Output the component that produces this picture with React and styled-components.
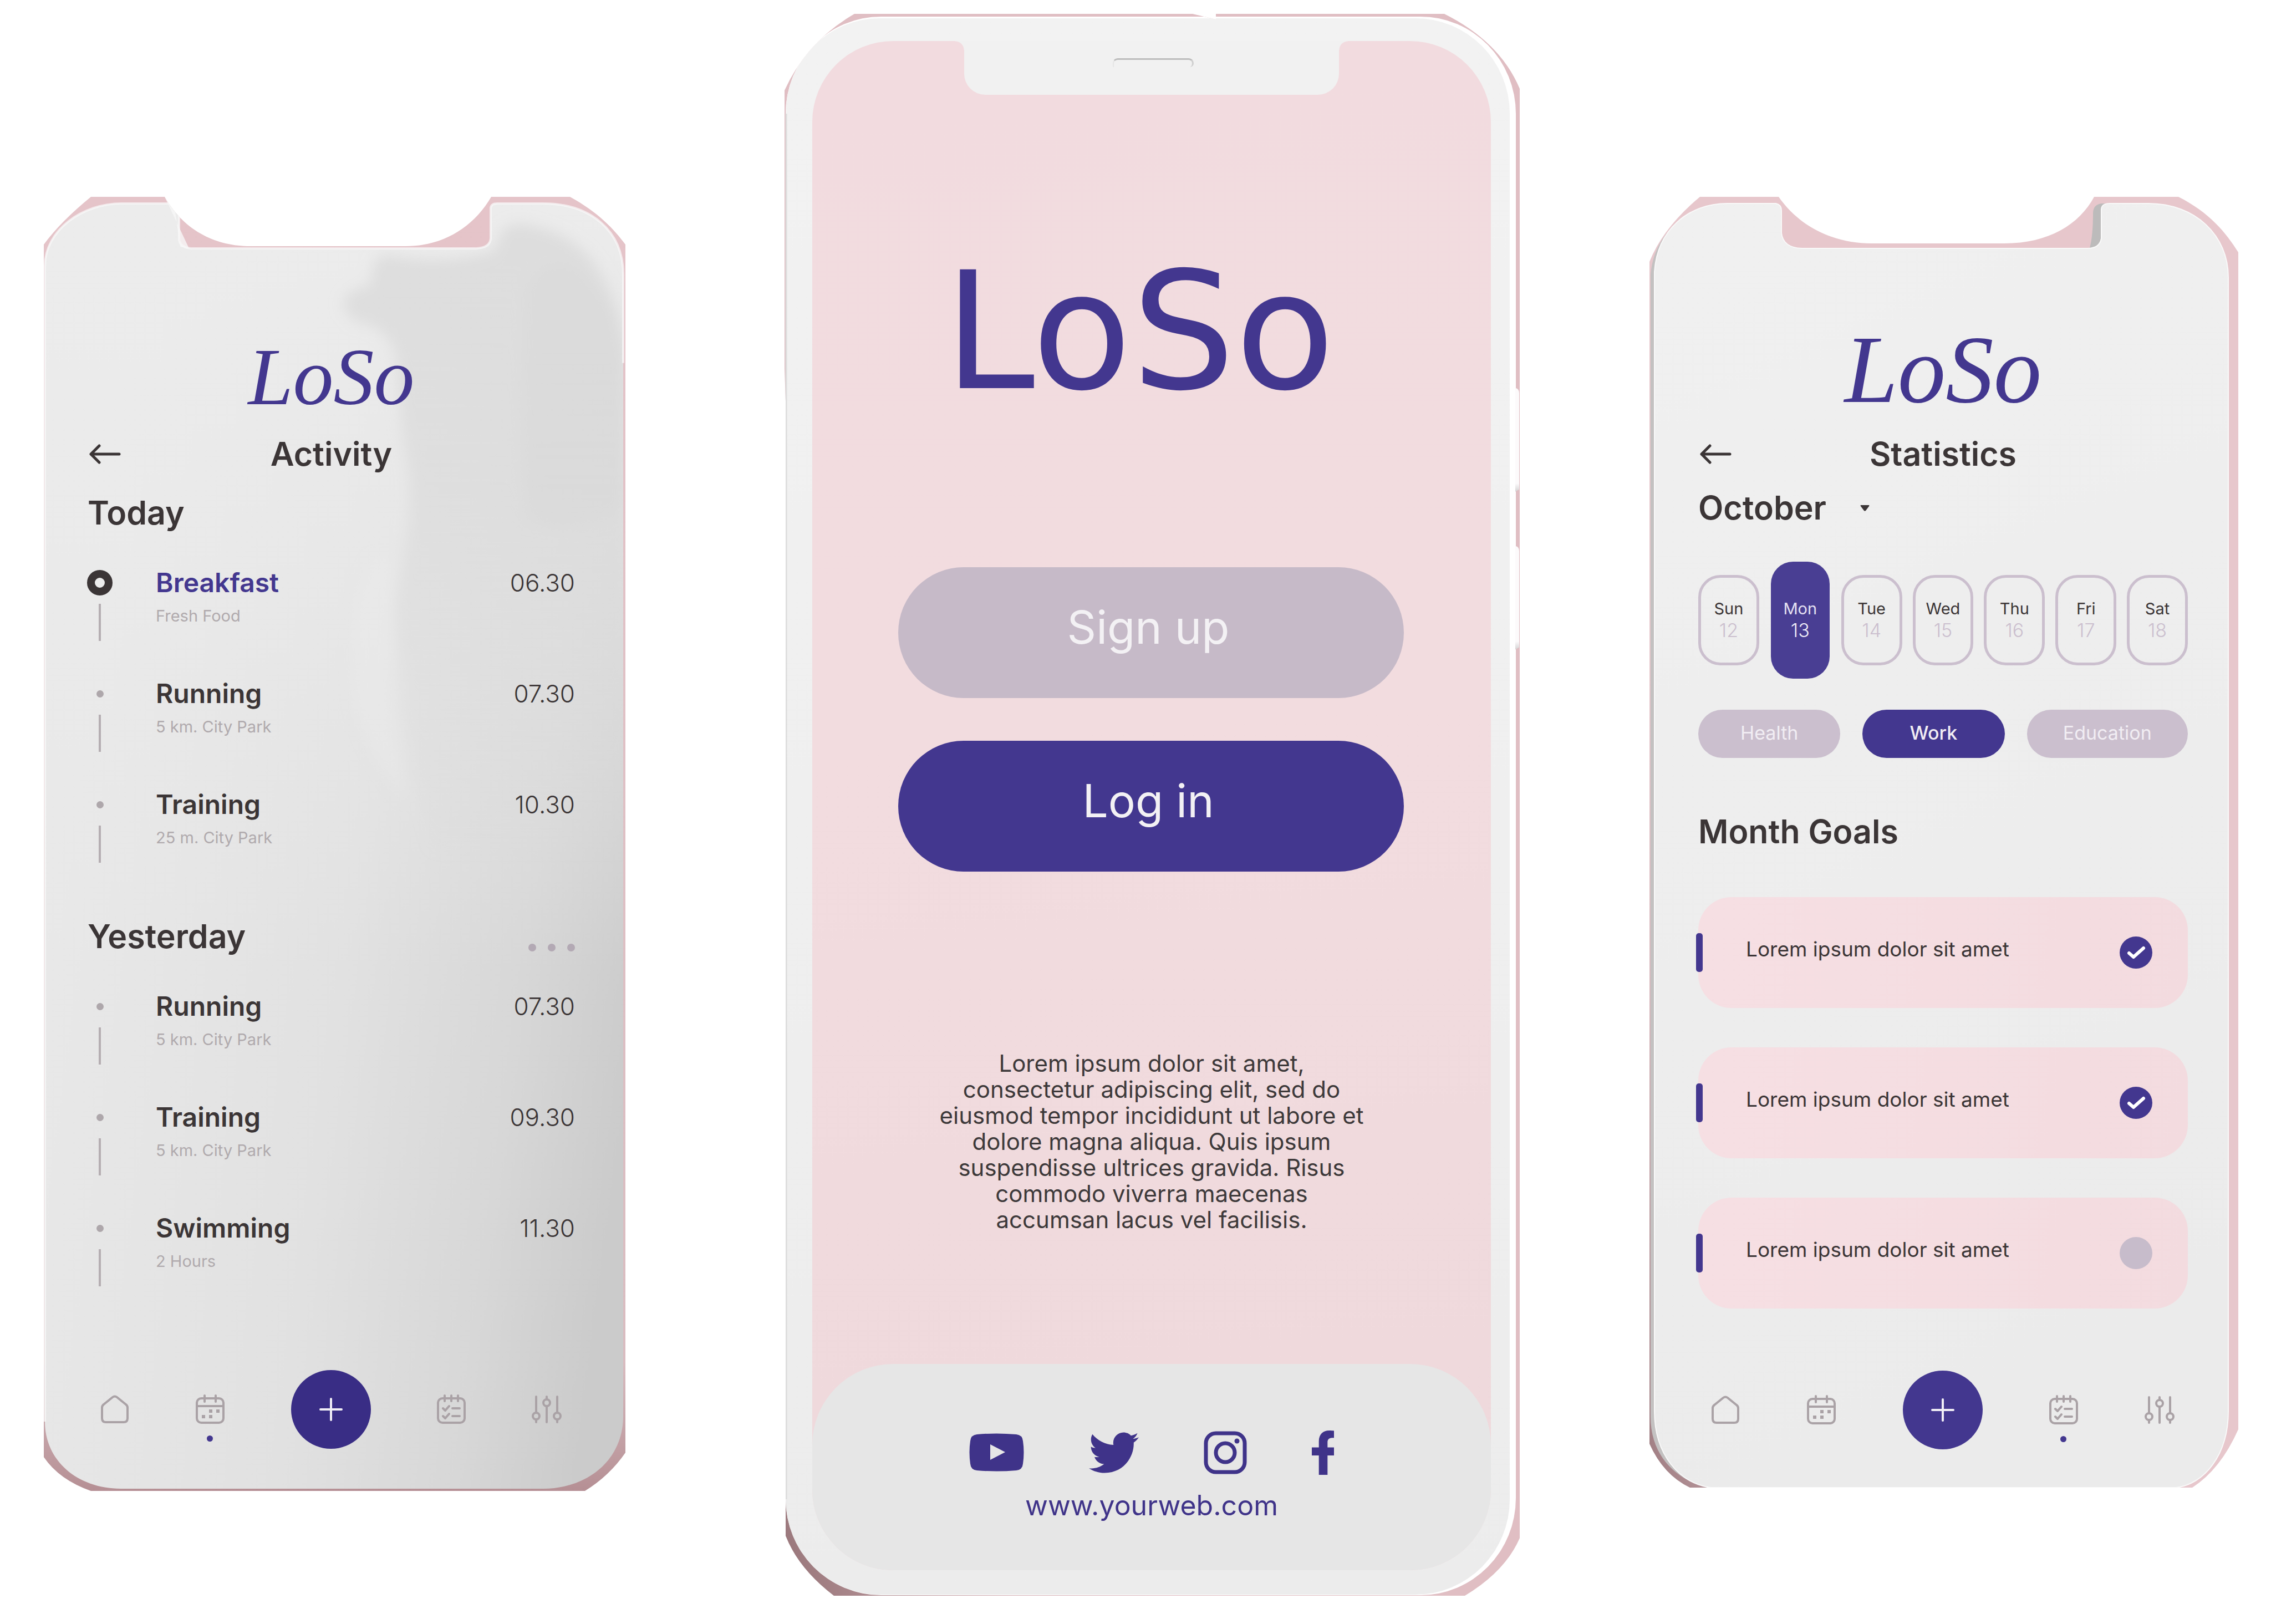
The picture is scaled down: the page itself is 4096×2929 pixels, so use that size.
import React from "react";
import styled, { createGlobalStyle, css } from "styled-components";
import { FaTwitter, FaFacebookF } from "react-icons/fa";

const indigo = "#43378f";
const ink = "#3b3536";
const lilac = "#cbbfce";
const muted = "#aea7ab";
const sans = 'Inter, "Open Sans", sans-serif';

const GlobalStyle = createGlobalStyle`
  *, *::before, *::after { box-sizing: border-box; }
  body { margin: 0; background: #ffffff; color: ${ink}; font-family: ${sans}; }
  h1, h2, h3, p, ul { margin: 0; padding: 0; font-weight: inherit; }
  ul { list-style: none; }
  button, select { margin: 0; padding: 0; border: 0; background: none; color: inherit; font-family: inherit; cursor: pointer; }
  a { color: inherit; text-decoration: none; }
`;

const Stage = styled.main`
  display: grid;
  grid-template-columns: 1049fr 1379fr 1062fr;
  column-gap: 234px;
  align-items: start;
  min-height: 100vh;
  padding: 25px 59px 50px 79px;
`;

const Artwork = styled.svg`
  position: absolute;
  inset: 0;
  width: 100%;
  height: 100%;
  z-index: -1;
`;

/* ---------- side phones ---------- */

const SidePhone = styled.section`
  position: relative;
  z-index: 0;
  display: flex;
  flex-direction: column;
  margin-top: 330px;
  padding: 220px 91px ${(p) => p.$bottom}px ${(p) => p.$left}px;
`;

const LogoRow = styled.div`
  display: flex;
  align-items: flex-end;
  justify-content: center;
  height: 178px;
`;

const SerifLogo = styled.h1`
  color: ${indigo};
  font-family: "Liberation Serif", serif;
  font-style: italic;
  font-size: ${(p) => p.$size}px;
  line-height: 1;
`;

const Header = styled.header`
  display: grid;
  grid-template-columns: 1fr auto 1fr;
  align-items: center;
  margin-top: 36px;
`;

const BackButton = styled.button`
  display: flex;
  justify-self: start;
`;

const Title = styled.h2`
  font-size: 59px;
  font-weight: 600;
  line-height: 60px;
`;

const SectionRow = styled.div`
  display: flex;
  justify-content: space-between;
  align-items: flex-end;
  margin-top: ${(p) => p.$top}px;
`;

const MoreButton = styled.button`
  display: flex;
  gap: 21px;
  padding-bottom: 3px;
`;

const MoreDot = styled.span`
  width: 14px;
  height: 14px;
  border-radius: 50%;
  background: #b3a9b4;
`;

const Timeline = styled.ul`
  display: flex;
  flex-direction: column;
  gap: 67px;
  margin: 68px 0 0 -1px;
`;

const Entry = styled.li`
  display: grid;
  grid-template-columns: 46px 1fr auto;
  column-gap: 78px;
`;

const Marker = styled.div`
  display: flex;
  flex-direction: column;
  align-items: center;
  height: 133px;
`;

const Bullet = styled.span`
  display: flex;
  align-items: center;
  height: 56px;

  &::before {
    content: "";
    width: 13px;
    height: 13px;
    border-radius: 50%;
    background: ${muted};
    ${(p) =>
      p.$active &&
      css`
        width: 46px;
        height: 46px;
        border: 14px solid ${ink};
        background: #ececec;
      `}
  }
`;

const Stem = styled.span`
  width: 4px;
  flex: 1;
  margin-top: 10px;
  background: #b5aeb2;
`;

const EntryName = styled.h3`
  color: ${(p) => (p.$active ? indigo : ink)};
  font-size: 48px;
  font-weight: 600;
  line-height: 56px;
`;

const EntryNote = styled.p`
  margin-top: 14px;
  color: #b0aaad;
  font-size: 29px;
  line-height: 36px;
`;

const EntryTime = styled.time`
  font-size: 44px;
  font-weight: 300;
  line-height: 56px;
`;

const BottomNav = styled.nav`
  display: flex;
  justify-content: space-between;
  align-items: center;
  margin: ${(p) => p.$top}px 24px 0 22px;
`;

const NavLink = styled.a`
  position: relative;
  display: flex;
  color: #aaa2a6;

  ${(p) =>
    p.$active &&
    css`
      &::after {
        content: "";
        position: absolute;
        top: 74px;
        left: calc(50% - 6px);
        width: 11px;
        height: 11px;
        border-radius: 50%;
        background: ${indigo};
      }
    `}
`;

const AddButton = styled.button`
  display: flex;
  align-items: center;
  justify-content: center;
  width: 144px;
  height: 142px;
  border-radius: 50%;
  background: ${(p) => (p.$deep ? "#392d85" : indigo)};
`;

const MonthPicker = styled.label`
  display: flex;
  align-items: center;
  gap: 60px;
  margin-top: 37px;
`;

const MonthSelect = styled.select`
  appearance: none;
  font-size: 59px;
  font-weight: 600;
  line-height: 60px;
  height: 60px;
`;

const Week = styled.div`
  display: grid;
  grid-template-columns: repeat(7, 1fr);
  column-gap: 19px;
  align-items: center;
  margin-top: 67px;
`;

const Day = styled.button`
  display: flex;
  flex-direction: column;
  align-items: center;
  justify-content: center;
  height: 163px;
  border: 5px solid ${lilac};
  border-radius: 40px;

  ${(p) =>
    p.$active &&
    css`
      height: 211px;
      margin: 0 2px;
      border: 0;
      background: #493e93;
      color: #e4e0f2;
    `}
`;

const DayName = styled.span`
  font-size: 29px;
  line-height: 36px;
`;

const DayNumber = styled.span`
  color: ${(p) => (p.$active ? "#f1eff8" : lilac)};
  font-size: 34px;
  font-weight: 300;
  line-height: 42px;
`;

const Chips = styled.div`
  display: grid;
  grid-template-columns: 255fr 255fr 289fr;
  column-gap: 40px;
  margin-top: 56px;
`;

const Chip = styled.button`
  height: 87px;
  border-radius: 44px;
  background: ${(p) => (p.$active ? indigo : lilac)};
  color: #f1edf3;
  font-size: 34px;
  font-weight: ${(p) => (p.$active ? 500 : 400)};
  line-height: 42px;
  padding-bottom: 4px;
`;

const Goals = styled.div`
  display: flex;
  flex-direction: column;
  gap: 71px;
  margin-top: 88px;
`;

const Goal = styled.label`
  position: relative;
  display: flex;
  align-items: center;
  justify-content: space-between;
  height: 200px;
  padding: 0 64px 0 86px;
  border-radius: 60px;
  background: linear-gradient(100deg, #f6dfe3, #f3dbdf);
  font-size: 37px;
  line-height: 48px;
  cursor: pointer;

  &::before {
    content: "";
    position: absolute;
    left: -4px;
    top: 65px;
    width: 12px;
    height: 70px;
    border-radius: 5px;
    background: ${indigo};
  }
`;

const GoalText = styled.span`
  padding-bottom: 12px;
`;

const Tick = styled.span`
  display: grid;
  place-items: center;

  & > * {
    grid-area: 1 / 1;
  }

  svg {
    pointer-events: none;
  }
`;

const TickInput = styled.input`
  appearance: none;
  width: 59px;
  height: 58px;
  margin: 0;
  border-radius: 50%;
  background: #c7bccb;

  &:checked {
    background: ${indigo};
  }
`;

/* ---------- centre phone ---------- */

const CentreColumn = styled.div`
  padding-left: 53px;
`;

const CentrePhone = styled.section`
  position: relative;
  z-index: 0;
  padding: 49px 52px 46px 50px;
`;

const Screen = styled.div`
  display: flex;
  flex-direction: column;
  align-items: center;
  overflow: hidden;
  border-radius: 146px;
  background: linear-gradient(175deg, #f2dbdf, #f2dcdf 45%, #eed8db);
`;

const Notch = styled.div`
  position: relative;
  display: flex;
  justify-content: center;
  width: 676px;
  height: 97px;
  padding: 31px 0 0 6px;
  border-radius: 0 0 38px 38px;
  background: #f1f1f1;

  &::before,
  &::after {
    content: "";
    position: absolute;
    top: 0;
    width: 16px;
    height: 16px;
  }

  &::before {
    right: 100%;
    background: radial-gradient(circle at 0 100%, transparent 15px, #f1f1f1 16px);
  }

  &::after {
    left: 100%;
    background: radial-gradient(circle at 100% 100%, transparent 15px, #f1f1f1 16px);
  }
`;

const Speaker = styled.span`
  width: 146px;
  height: 16px;
  border-top: 3px solid #bdbdbd;
  border-right: 3px solid #cfcfcf;
  border-left: 2px solid #e6e6e6;
  border-radius: 10px 10px 8px 0;
`;

const SansLogo = styled.h1`
  margin-top: 257px;
  padding-right: 44px;
  color: ${indigo};
  font-family: "DejaVu Sans", sans-serif;
  font-size: 294px;
  line-height: 340px;
`;

const Actions = styled.div`
  display: flex;
  flex-direction: column;
  gap: 77px;
  align-self: stretch;
  margin-top: 255px;
  padding: 0 157px 0 155px;
`;

const Action = styled.button`
  height: 236px;
  padding: 0 10px 18px 0;
  border-radius: 118px;
  background: ${(p) => (p.$primary ? indigo : "#c6bac8")};
  color: #f3f1f4;
  font-size: 82px;
  line-height: 96px;
`;

const Blurb = styled.p`
  margin-top: 322px;
  color: #3d393a;
  font-size: 42px;
  line-height: 47px;
  text-align: center;
  white-space: pre-line;
`;

const Footer = styled.footer`
  display: flex;
  flex-direction: column;
  align-items: center;
  align-self: stretch;
  gap: 25px;
  margin-top: 237px;
  padding: 119px 0 87px;
  border-radius: 146px 146px 0 0;
  background: #e6e6e6;
  color: #3f3389;
`;

const Socials = styled.div`
  display: flex;
  align-items: center;
  gap: 117px;
  height: 81px;
`;

const Social = styled.a`
  display: flex;
`;

const TwitterIcon = styled(FaTwitter)`
  width: 90px;
  height: 74px;
`;

const FacebookIcon = styled(FaFacebookF)`
  width: 40px;
  height: 80px;
`;

const WebLink = styled.a`
  font-size: 50px;
  line-height: 60px;
`;

/* ---------- icons ---------- */

const ArrowIcon = () => (
  <svg width="60" height="36" viewBox="-2 0 60 36" fill="none" stroke={ink} strokeWidth="5" strokeLinecap="round" strokeLinejoin="round">
    <path d="M55 18H4M19 3L4 18L19 33" />
  </svg>
);

const NavIcon = ({ children }) => (
  <svg width="54" height="54" viewBox="0 0 54 54" fill="none" stroke="currentColor" strokeWidth="4" strokeLinecap="round" strokeLinejoin="round">
    {children}
  </svg>
);

const HomeIcon = () => (
  <NavIcon>
    <path d="M4 24Q4 20 7 18L23 5Q27 2 31 5L47 18Q50 20 50 24V43Q50 50 43 50H11Q4 50 4 43Z" />
  </NavIcon>
);

const CalendarIcon = () => (
  <NavIcon>
    <rect x="3" y="7" width="48" height="44" rx="8" />
    <path d="M3 21H51M17 2V13M37 2V13" />
    <path d="M25 30h6M38 30h6M12 40h6M25 40h6" strokeWidth="6" strokeLinecap="butt" />
  </NavIcon>
);

const TasksIcon = () => (
  <NavIcon>
    <rect x="3" y="7" width="48" height="44" rx="8" />
    <path d="M15 2V12M27 2V12M39 2V12" />
    <path d="M12 25l4 4l7 -8M12 39l4 4l7 -8M29 25H42M29 39H42" />
  </NavIcon>
);

const SlidersIcon = () => (
  <NavIcon>
    <path d="M8 4V33M8 45V50M27 4V9M27 21V50M46 4V33M46 45V50" />
    <circle cx="8" cy="39" r="6" />
    <circle cx="27" cy="15" r="6" />
    <circle cx="46" cy="39" r="6" />
  </NavIcon>
);

const PlusIcon = () => (
  <svg width="44" height="44" viewBox="0 0 44 44" stroke="#f1eff6" strokeWidth="4" strokeLinecap="round">
    <path d="M22 3V41M3 22H41" />
  </svg>
);

const YoutubeIcon = () => (
  <svg width="99" height="69" viewBox="0 0 99 69">
    <path fill="currentColor" d="M14 2Q49 -1 85 2Q96 3 97 14Q100 34 97 55Q96 66 85 67Q49 70 14 67Q3 66 2 55Q-1 34 2 14Q3 3 14 2Z" />
    <path fill="#e6e6e6" d="M38 20L65 34L38 48Z" />
  </svg>
);

const InstagramIcon = () => (
  <svg width="78" height="78" viewBox="0 0 78 78" fill="none" stroke="currentColor" strokeWidth="7">
    <rect x="4" y="4" width="70" height="70" rx="18" />
    <circle cx="39" cy="39" r="17" />
    <circle cx="60" cy="18" r="4.5" fill="currentColor" stroke="none" />
  </svg>
);

const CheckMark = () => (
  <svg width="34" height="24" viewBox="0 0 34 24" fill="none" stroke="#fff" strokeWidth="6" strokeLinecap="round" strokeLinejoin="round">
    <path d="M4 13L12 20L30 4" />
  </svg>
);

/* ---------- device artwork ---------- */

const ActivityCase = () => (
  <Artwork viewBox="0 0 1049 2335" preserveAspectRatio="none" aria-hidden="true">
    <defs>
      <clipPath id="a-outline">
        <path d="M0 86Q30 45 85 0H218C255 65 315 89 372 89H653C720 89 775 55 807 0H949C1000 28 1028 58 1049 86V2266Q1020 2308 976 2335H85Q28 2315 0 2274Z" />
      </clipPath>
      <linearGradient id="a-edge" x1="0" y1="0" x2="0" y2="1">
        <stop offset="0" stopColor="#e5c4c9" />
        <stop offset="0.9" stopColor="#d9bcc0" />
        <stop offset="1" stopColor="#b58f94" />
      </linearGradient>
      <linearGradient id="a-body" gradientUnits="userSpaceOnUse" x1="0" y1="1400" x2="1060" y2="1540">
        <stop offset="0" stopColor="#e8e8e8" />
        <stop offset="0.5" stopColor="#e1e1e1" />
        <stop offset="0.8" stopColor="#d7d7d7" />
        <stop offset="1" stopColor="#cbcbcb" />
      </linearGradient>
      <linearGradient id="a-light" x1="0" y1="0" x2="0" y2="1">
        <stop offset="0" stopColor="#ececec" />
        <stop offset="0.12" stopColor="#ececec" stopOpacity="0.8" />
        <stop offset="0.6" stopColor="#ececec" stopOpacity="0" />
      </linearGradient>
      <linearGradient id="a-shade" gradientUnits="userSpaceOnUse" x1="0" y1="100" x2="0" y2="1180">
        <stop offset="0" stopColor="#d6d6d6" stopOpacity="0.65" />
        <stop offset="0.4" stopColor="#d6d6d6" stopOpacity="0.5" />
        <stop offset="1" stopColor="#d6d6d6" stopOpacity="0.05" />
      </linearGradient>
      <filter id="a-soft" x="-20%" y="-20%" width="140%" height="140%">
        <feGaussianBlur stdDeviation="12" />
      </filter>
      <clipPath id="a-bodyclip">
        <path d="M2 125C2 60 70 12 140 12H226Q244 13 244 30V78Q247 92 266 93H780Q805 92 806 75V20Q807 12 818 12H900C985 12 1045 60 1045 140V2200C1045 2280 980 2331 900 2331H140C60 2331 2 2280 2 2210Z" />
      </clipPath>
    </defs>
    <g clipPath="url(#a-outline)">
      <rect width="1049" height="2335" fill="url(#a-edge)" />
      <g clipPath="url(#a-bodyclip)">
        <rect width="1049" height="2335" fill="url(#a-body)" />
        <rect width="1049" height="2335" fill="url(#a-light)" />
        <g filter="url(#a-soft)">
          <path fill="url(#a-shade)" d="M538 196Q545 165 590 160Q590 105 620 105Q720 125 815 96Q820 45 865 49Q960 65 1000 130Q1045 200 1050 300V1180H700Q672 1080 650 900Q630 780 636 708Q660 620 660 509Q640 400 636 290Q620 230 560 225Z" />
          <path fill="#d8d8d8" opacity="0.4" d="M870 160Q900 110 960 130Q1045 200 1050 300V560Q960 620 870 585Q850 380 870 160Z" />
          <path fill="#ebebeb" opacity="0.45" d="M590 660Q640 620 630 760Q620 900 655 1090Q560 980 560 880Q550 740 590 660Z" />
        </g>
      </g>
      <path fill="none" stroke="#fafafa" strokeOpacity="0.7" strokeWidth="4" d="M2 2210V125C2 60 70 12 140 12H226Q244 14 244 30V78Q247 92 266 93H780Q805 92 806 75V20Q807 12 818 12H900C985 12 1045 60 1045 140V300" />
      <path fill="#f8f8f8" d="M218 0L262 93L246 90L236 20Z" opacity="0.8" />
    </g>
  </Artwork>
);

const StatisticsCase = () => (
  <Artwork viewBox="0 0 1062 2328" preserveAspectRatio="none" aria-hidden="true">
    <defs>
      <clipPath id="s-outline">
        <path d="M0 117Q25 55 91 0H233C275 60 340 84 400 84H640C720 84 775 50 802 0H954C1010 28 1040 65 1062 100V2223Q1030 2295 979 2328H73Q25 2305 0 2249Z" />
      </clipPath>
      <linearGradient id="s-edge" x1="0" y1="1" x2="0.3" y2="0.8">
        <stop offset="0" stopColor="#9d7b80" />
        <stop offset="0.6" stopColor="#d9b9be" />
        <stop offset="1" stopColor="#e7c7cc" />
      </linearGradient>
      <linearGradient id="s-body" x1="0" y1="0" x2="0.2" y2="1">
        <stop offset="0" stopColor="#f0f0f0" />
        <stop offset="0.6" stopColor="#ededed" />
        <stop offset="1" stopColor="#ebebeb" />
      </linearGradient>
    </defs>
    <g clipPath="url(#s-outline)">
      <rect width="1062" height="2328" fill="url(#s-edge)" />
      <path fill="#c3c1c1" d="M2 140C8 70 60 22 130 16L130 2328H110C60 2320 2 2280 2 2200Z" />
      <path fill="#bcbbbb" d="M815 12Q800 14 800 30Q800 70 794 92H840V12Z" />
      <path fill="url(#s-body)" d="M9 135C14 60 70 12 140 12H228Q238 14 238 25V65Q241 92 275 93H790Q812 93 815 75V22Q816 12 830 12H900C985 12 1044 70 1044 145V2190C1044 2270 1000 2322 950 2328H110C55 2320 9 2270 9 2190Z" stroke="#f9f9f9" strokeWidth="2" />
    </g>
  </Artwork>
);

const WelcomeCase = () => (
  <Artwork viewBox="0 0 1326 2854" preserveAspectRatio="none" aria-hidden="true">
    <defs>
      <clipPath id="w-outline">
        <path d="M0 138Q40 50 126 0H736L778 10V0H1190Q1290 50 1326 135V2750Q1300 2810 1227 2854H89Q25 2805 2 2746L2 700L0 640Z" />
      </clipPath>
      <linearGradient id="w-edge" x1="0" y1="1" x2="0.4" y2="0.7">
        <stop offset="0" stopColor="#957377" />
        <stop offset="0.5" stopColor="#d5b1b6" />
        <stop offset="1" stopColor="#e0bec3" />
      </linearGradient>
      <linearGradient id="w-body" x1="0" y1="0" x2="0" y2="1">
        <stop offset="0" stopColor="#f2f2f2" />
        <stop offset="1" stopColor="#ececec" />
      </linearGradient>
      <linearGradient id="w-key" x1="0" y1="0" x2="0" y2="1">
        <stop offset="0" stopColor="#fcfafb" />
        <stop offset="0.92" stopColor="#fcfafb" />
        <stop offset="1" stopColor="#d5d3d4" />
      </linearGradient>
    </defs>
    <g clipPath="url(#w-outline)">
      <rect width="1326" height="2854" fill="url(#w-edge)" />
      <rect x="2" y="5" width="1317" height="2848" rx="172" ry="175" fill="#ffffff" />
      <rect x="2" y="8" width="1306" height="2844" rx="170" ry="172" fill="url(#w-body)" />
      <path fill="none" stroke="#dcdcdc" strokeWidth="3" d="M3 180V2680" />
      <path fill="url(#w-key)" d="M1318 675Q1325 676 1325 685V858L1318 862Z" />
      <path fill="url(#w-key)" d="M1318 960Q1325 961 1325 970V1143L1318 1147Z" />
    </g>
  </Artwork>
);

/* ---------- composed parts ---------- */

const ScreenHeader = ({ title }) => (
  <Header>
    <BackButton aria-label="Back">
      <ArrowIcon />
    </BackButton>
    <Title>{title}</Title>
  </Header>
);

const navItems = [
  { id: "home", Icon: HomeIcon },
  { id: "calendar", Icon: CalendarIcon },
  { id: "add" },
  { id: "tasks", Icon: TasksIcon },
  { id: "settings", Icon: SlidersIcon },
];

const TabBar = ({ active, top, deep }) => (
  <BottomNav $top={top}>
    {navItems.map(({ id, Icon }) =>
      Icon ? (
        <NavLink key={id} href={`#${id}`} aria-label={id} $active={id === active}>
          <Icon />
        </NavLink>
      ) : (
        <AddButton key={id} aria-label={id} $deep={deep}>
          <PlusIcon />
        </AddButton>
      )
    )}
  </BottomNav>
);

const today = [
  { name: "Breakfast", note: "Fresh Food", time: "06.30", active: true },
  { name: "Running", note: "5 km. City Park", time: "07.30" },
  { name: "Training", note: "25 m. City Park", time: "10.30" },
];

const yesterday = [
  { name: "Running", note: "5 km. City Park", time: "07.30" },
  { name: "Training", note: "5 km. City Park", time: "09.30" },
  { name: "Swimming", note: "2 Hours", time: "11.30" },
];

const EntryList = ({ entries }) => (
  <Timeline>
    {entries.map((e) => (
      <Entry key={e.name}>
        <Marker>
          <Bullet $active={e.active} />
          <Stem />
        </Marker>
        <div>
          <EntryName $active={e.active}>{e.name}</EntryName>
          <EntryNote>{e.note}</EntryNote>
        </div>
        <EntryTime>{e.time}</EntryTime>
      </Entry>
    ))}
  </Timeline>
);

const ActivityPhone = () => (
  <SidePhone $left={79} $bottom={76}>
    <ActivityCase />
    <LogoRow>
      <SerifLogo $size={146}>LoSo</SerifLogo>
    </LogoRow>
    <ScreenHeader title="Activity" />
    <SectionRow $top={46}>
      <Title>Today</Title>
    </SectionRow>
    <EntryList entries={today} />
    <SectionRow $top={103}>
      <Title>Yesterday</Title>
      <MoreButton aria-label="More">
        <MoreDot />
        <MoreDot />
        <MoreDot />
      </MoreButton>
    </SectionRow>
    <EntryList entries={yesterday} />
    <TabBar active="calendar" top={151} deep />
  </SidePhone>
);

const blurb = `Lorem ipsum dolor sit amet,
consectetur adipiscing elit, sed do
eiusmod tempor incididunt ut labore et
dolore magna aliqua. Quis ipsum
suspendisse ultrices gravida. Risus
commodo viverra maecenas
accumsan lacus vel facilisis.`;

const WelcomePhone = () => (
  <CentrePhone>
    <WelcomeCase />
    <Screen>
      <Notch>
        <Speaker />
      </Notch>
      <SansLogo>LoSo</SansLogo>
      <Actions>
        <Action>Sign up</Action>
        <Action $primary>Log in</Action>
      </Actions>
      <Blurb>{blurb}</Blurb>
      <Footer>
        <Socials>
          <Social href="#youtube" aria-label="YouTube">
            <YoutubeIcon />
          </Social>
          <Social href="#twitter" aria-label="Twitter">
            <TwitterIcon viewBox="0 48 512 416" />
          </Social>
          <Social href="#instagram" aria-label="Instagram">
            <InstagramIcon />
          </Social>
          <Social href="#facebook" aria-label="Facebook">
            <FacebookIcon viewBox="23 0 256 512" />
          </Social>
        </Socials>
        <WebLink href="#web">www.yourweb.com</WebLink>
      </Footer>
    </Screen>
  </CentrePhone>
);

const days = [
  ["Sun", 12],
  ["Mon", 13],
  ["Tue", 14],
  ["Wed", 15],
  ["Thu", 16],
  ["Fri", 17],
  ["Sat", 18],
];

const StatisticsPhone = () => (
  <SidePhone $left={88} $bottom={69}>
    <StatisticsCase />
    <LogoRow>
      <SerifLogo $size={173}>LoSo</SerifLogo>
    </LogoRow>
    <ScreenHeader title="Statistics" />
    <MonthPicker>
      <MonthSelect aria-label="Month" defaultValue="October">
        <option>October</option>
      </MonthSelect>
      <svg width="17" height="11" viewBox="0 0 17 11" fill={ink}>
        <path d="M1 0H16Q17 1 16 2L10 10Q8 11 7 10L1 2Q0 1 1 0Z" />
      </svg>
    </MonthPicker>
    <Week>
      {days.map(([name, number]) => (
        <Day key={name} $active={number === 13}>
          <DayName>{name}</DayName>
          <DayNumber $active={number === 13}>{number}</DayNumber>
        </Day>
      ))}
    </Week>
    <Chips>
      <Chip>Health</Chip>
      <Chip $active>Work</Chip>
      <Chip>Education</Chip>
    </Chips>
    <SectionRow $top={103}>
      <Title>Month Goals</Title>
    </SectionRow>
    <Goals>
      {[true, true, false].map((done, i) => (
        <Goal key={i}>
          <GoalText>Lorem ipsum dolor sit amet</GoalText>
          <Tick>
            <TickInput type="checkbox" defaultChecked={done} />
            {done && <CheckMark />}
          </Tick>
        </Goal>
      ))}
    </Goals>
    <TabBar active="tasks" top={112} />
  </SidePhone>
);

export default function App() {
  return (
    <>
      <GlobalStyle />
      <Stage>
        <ActivityPhone />
        <CentreColumn>
          <WelcomePhone />
        </CentreColumn>
        <StatisticsPhone />
      </Stage>
    </>
  );
}
